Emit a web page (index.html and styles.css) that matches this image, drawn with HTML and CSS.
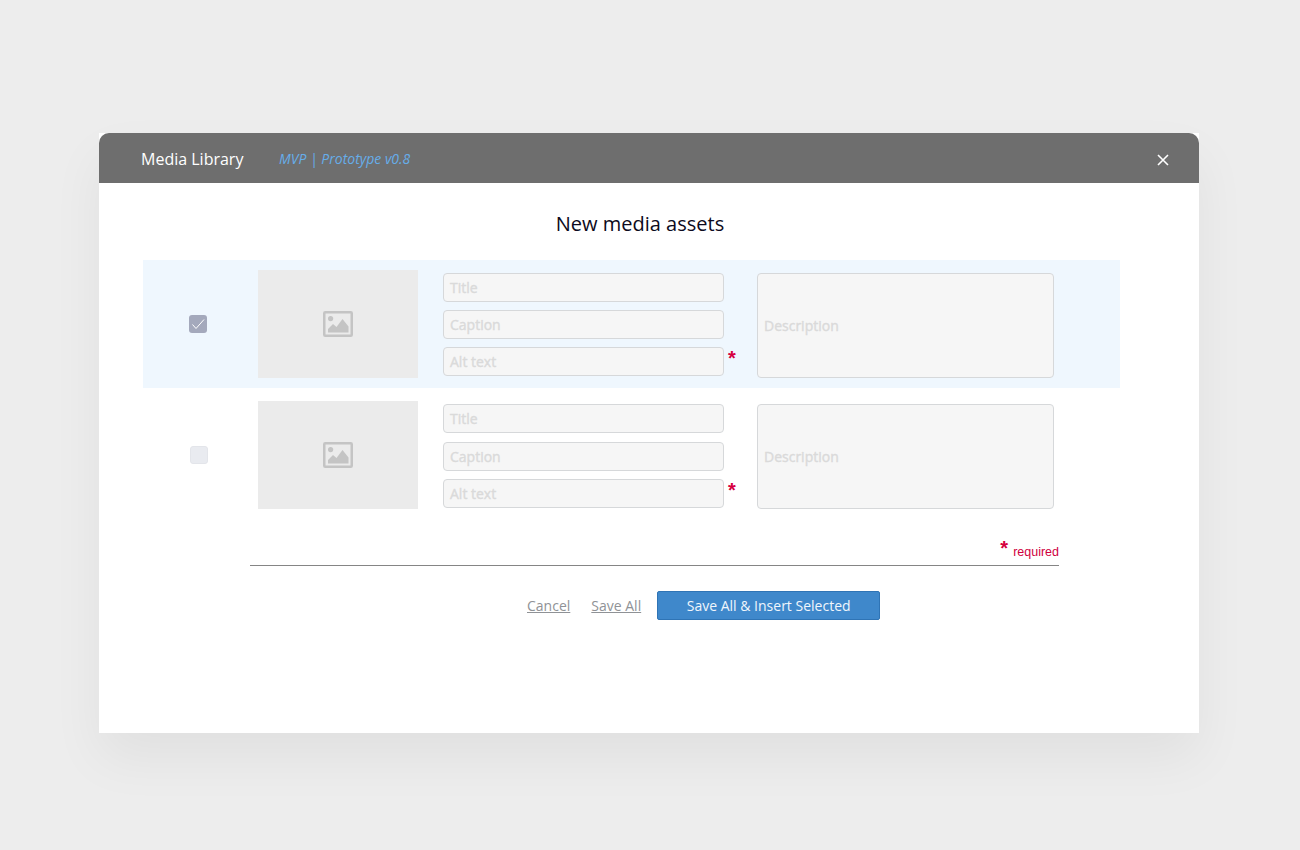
FILE: index.html
```html
<!DOCTYPE html>
<html lang="en">
<head>
<meta charset="utf-8">
<title>Media Library</title>
<link rel="stylesheet" href="styles.css">
</head>
<body>
<div class="dialog">
  <header class="head">
    <span class="head-title">Media Library</span>
    <span class="head-tag">MVP | Prototype v0.8</span>
    <svg class="close" viewBox="0 0 12 12" width="12" height="12"><path d="M1 1L11 11M11 1L1 11" stroke="#fff" stroke-width="1.6" fill="none"/></svg>
  </header>
  <main class="body">
    <h1 class="heading">New media assets</h1>
    <section class="row row-selected">
      <div class="check-cell">
        <span class="check check-on"><svg viewBox="0 0 18 18" width="18" height="18"><path d="M3.5 9.5L7 13.5L15 4.5" stroke="#fff" stroke-width="1" fill="none"/></svg></span>
      </div>
      <div class="thumb"><svg viewBox="0 0 30 26" width="30" height="26"><rect x="1.25" y="1.25" width="27.5" height="23.5" rx="1" fill="none" stroke="#c4c4c4" stroke-width="2.5"/><circle cx="7.6" cy="7.6" r="2.6" fill="#c4c4c4"/><path d="M5 21.5V18L10 13L13.5 16L19.5 8L25.5 15.5V21.5Z" fill="#c4c4c4"/></svg></div>
      <div class="fields">
        <div class="field">Title</div>
        <div class="field">Caption</div>
        <div class="field field-req">Alt text<span class="star">*</span></div>
      </div>
      <div class="desc">Description</div>
    </section>
    <section class="row row-plain">
      <div class="check-cell">
        <span class="check check-off"></span>
      </div>
      <div class="thumb"><svg viewBox="0 0 30 26" width="30" height="26"><rect x="1.25" y="1.25" width="27.5" height="23.5" rx="1" fill="none" stroke="#c4c4c4" stroke-width="2.5"/><circle cx="7.6" cy="7.6" r="2.6" fill="#c4c4c4"/><path d="M5 21.5V18L10 13L13.5 16L19.5 8L25.5 15.5V21.5Z" fill="#c4c4c4"/></svg></div>
      <div class="fields fields-two">
        <div class="field">Title</div>
        <div class="field">Caption</div>
        <div class="field field-req">Alt text<span class="star">*</span></div>
      </div>
      <div class="desc">Description</div>
    </section>
    <div class="req-line"><span class="req-star">*</span><span class="req-text">required</span></div>
    <div class="actions">
      <a class="link" href="#">Cancel</a>
      <a class="link" href="#">Save All</a>
      <button class="primary" type="button">Save All &amp; Insert Selected</button>
    </div>
  </main>
</div>
</body>
</html>
```
FILE: styles.css
```css
* { box-sizing: border-box; }
html, body { margin: 0; height: 100%; }
body {
  background: #ededed;
  font-family: "Open Sans", sans-serif;
  padding: 133px 0 0 99px;
  overflow: hidden;
}
.dialog {
  width: 1100px;
  height: 600px;
  background: #fff;
  box-shadow: 0 25px 50px rgba(0, 0, 0, 0.055);
}
.head {
  height: 50px;
  background: #6e6e6e;
  border-radius: 10px 10px 0 0;
  display: flex;
  align-items: center;
  padding: 2px 30px 0 42px;
}
.head-title { color: #fff; font-size: 16px; line-height: 22px; width: 138px; }
.head-tag { color: #66ade9; font-size: 14px; font-style: italic; line-height: 22px; }
.close { margin-left: auto; margin-top: 1px; }
.body { padding-top: 28px; }
.heading {
  margin: 0 0 23px;
  padding-right: 18px;
  text-align: center;
  font-size: 20px;
  line-height: 26px;
  font-weight: 400;
  color: #0c0a20;
}
.row {
  margin-left: 44px;
  width: 977px;
  display: flex;
  align-items: flex-start;
}
.row-selected { height: 128px; padding-top: 10px; background: #eff7fe; }
.row-plain { height: 108px; margin-top: 13px; }
.check-cell { width: 115px; flex: none; align-self: stretch; display: flex; align-items: center; padding-left: 46px; }
.row-selected .check-cell { padding-bottom: 10px; }
.row-plain .check-cell { padding-left: 47px; }
.check { display: block; width: 18px; height: 18px; border-radius: 3px; }
.check-on { background: #a4a9bc; }
.check-off { background: #e9ebf0; border: 1px solid #e3e5ea; }
.thumb {
  width: 160px;
  height: 108px;
  flex: none;
  background: #ebebeb;
  display: flex;
  align-items: center;
  justify-content: center;
}
.fields {
  width: 281px;
  flex: none;
  margin: 3px 0 0 25px;
  display: flex;
  flex-direction: column;
  gap: 8px;
}
.fields-two { gap: 9px 0; }
.fields-two .field-req { margin-top: -1px; }
.field, .desc {
  background: #f6f6f6;
  border: 1px solid #d6d8da;
  border-radius: 4px;
  color: #dadada;
  font-size: 14px;
  font-weight: 400;
  -webkit-text-stroke: 0.4px #dadada;
}
.field { height: 29px; line-height: 28px; padding-left: 6px; position: relative; }
.star {
  position: absolute;
  left: 284px;
  top: -1px;
  color: #d6003f;
  font-family: "Liberation Sans", sans-serif;
  font-size: 20px;
  line-height: 22px;
  font-weight: 700;
  -webkit-text-stroke: 0;
}
.desc {
  width: 297px;
  height: 105px;
  flex: none;
  margin: 3px 0 0 33px;
  padding-left: 6px;
  display: flex;
  align-items: center;
}
.req-line {
  margin: 29px 0 0 151px;
  width: 809px;
  height: 28px;
  border-bottom: 1px solid #858585;
  display: flex;
  justify-content: flex-end;
  align-items: flex-end;
  gap: 5px;
  color: #d6003f;
}
.req-star { font-family: "Liberation Sans", sans-serif; font-weight: 700; font-size: 20px; line-height: 34px; }
.req-text { font-family: "Liberation Sans", sans-serif; font-size: 12.5px; line-height: 26px; color: #cf0040; }
.actions {
  margin-top: 25px;
  margin-left: 428px;
  display: flex;
  align-items: center;
}
.link { color: #8f9296; font-size: 14px; text-decoration: underline; margin-right: 21px; line-height: 28px; }
.link + .link { margin-right: 16px; }
.primary {
  width: 223px;
  height: 29px;
  background: #3f88cb;
  border: 1px solid #2f74b5;
  border-radius: 2px;
  color: #f0f6fc;
  font-family: inherit;
  font-size: 14px;
  padding: 0;
}
```
